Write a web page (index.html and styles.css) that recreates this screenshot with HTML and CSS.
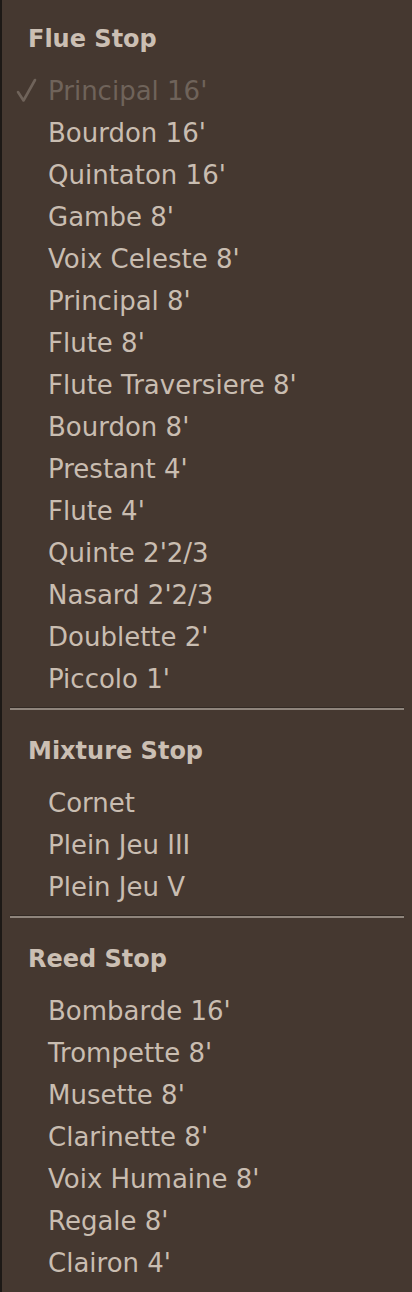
FILE: index.html
```html
<!DOCTYPE html>
<html lang="en">
<head>
    <meta charset="UTF-8">
    <meta name="viewport" content="width=device-width, initial-scale=1.0">
    <title>Stop Menu</title>
    <link rel="stylesheet" href="styles.css">
</head>
<body>
    <div class="menu">
        <div class="section">
            <div class="header">Flue Stop</div>
            <div class="item disabled checked">
                <svg class="check" width="24" height="26" viewBox="0 0 24 26">
                    <path d="M3 14 L8.5 22.5 L20 2" fill="none" stroke="currentColor" stroke-width="2.6" stroke-linecap="round" stroke-linejoin="round"/>
                </svg>Principal 16'</div>
            <div class="item">Bourdon 16'</div>
            <div class="item">Quintaton 16'</div>
            <div class="item">Gambe 8'</div>
            <div class="item">Voix Celeste 8'</div>
            <div class="item">Principal 8'</div>
            <div class="item">Flute 8'</div>
            <div class="item">Flute Traversiere 8'</div>
            <div class="item">Bourdon 8'</div>
            <div class="item">Prestant 4'</div>
            <div class="item">Flute 4'</div>
            <div class="item">Quinte 2'2/3</div>
            <div class="item">Nasard 2'2/3</div>
            <div class="item">Doublette 2'</div>
            <div class="item">Piccolo 1'</div>
        </div>

        <div class="separator"></div>

        <div class="section">
            <div class="header">Mixture Stop</div>
            <div class="item">Cornet</div>
            <div class="item">Plein Jeu III</div>
            <div class="item">Plein Jeu V</div>
        </div>

        <div class="separator"></div>

        <div class="section">
            <div class="header">Reed Stop</div>
            <div class="item">Bombarde 16'</div>
            <div class="item">Trompette 8'</div>
            <div class="item">Musette 8'</div>
            <div class="item">Clarinette 8'</div>
            <div class="item">Voix Humaine 8'</div>
            <div class="item">Regale 8'</div>
            <div class="item">Clairon 4'</div>
        </div>
    </div>
</body>
</html>
```

FILE: styles.css
```css
html, body {
    margin: 0;
    padding: 0;
    background-color: #453830;
}

body {
    font-family: "DejaVu Sans", Verdana, sans-serif;
    font-size: 26px;
    color: #c9bdb1;
    border-left: 2px solid #1d1916;
    min-height: 1292px;
    box-sizing: border-box;
}

.menu {
    padding-top: 18px;
}

.header {
    height: 42px;
    line-height: 42px;
    padding-left: 26px;
    margin-bottom: 10px;
    font-size: 24px;
    font-weight: bold;
    color: #cbbfb3;
}

.item {
    position: relative;
    height: 42px;
    line-height: 42px;
    padding-left: 46px;
    white-space: nowrap;
}

.item.disabled {
    color: #6f635a;
}

.check {
    position: absolute;
    left: 13px;
    top: 8px;
}

.separator {
    margin: 7px 8px 20px 8px;
    border-top: 1px solid #332a24;
    border-bottom: 2px solid #8f857c;
}
```
